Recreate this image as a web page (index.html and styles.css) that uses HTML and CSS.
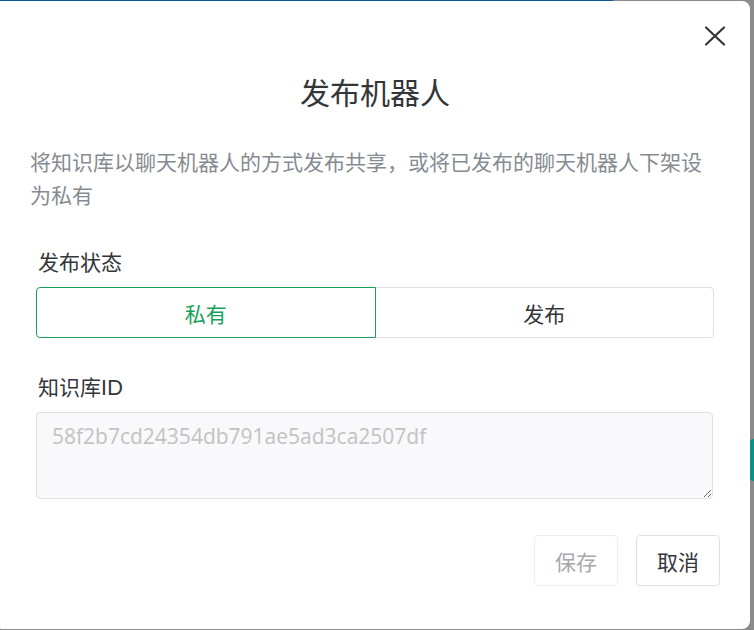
FILE: index.html
```html
<!DOCTYPE html>
<html lang="zh-CN">
<head>
<meta charset="utf-8">
<title>发布机器人</title>
<link rel="stylesheet" href="styles.css">
</head>
<body>
<div class="top-line"></div>
<div class="stage">
  <div class="modal">
    <div class="modal-head">
      <button class="close" aria-label="关闭">
        <svg width="24" height="24" viewBox="0 0 24 24"><path d="M3 3.5 L21 20.5 M21 3.5 L3 20.5" stroke="#333639" stroke-width="2.2" fill="none" stroke-linecap="round"/></svg>
      </button>
    </div>
    <h2 class="title">发布机器人</h2>
    <p class="desc">将知识库以聊天机器人的方式发布共享，或将已发布的聊天机器人下架设为私有</p>
    <div class="form">
      <div class="field">
        <div class="label">发布状态</div>
        <div class="seg">
          <div class="seg-item active">私有</div>
          <div class="seg-item">发布</div>
        </div>
      </div>
      <div class="field">
        <div class="label">知识库ID</div>
        <textarea class="input" disabled>58f2b7cd24354db791ae5ad3ca2507df</textarea>
      </div>
    </div>
    <div class="footer">
      <button class="btn" disabled>保存</button>
      <button class="btn">取消</button>
    </div>
  </div>
  <div class="side-mark"></div>
</div>
</body>
</html>
```
FILE: styles.css
```css
* { box-sizing: border-box; }
html, body { margin: 0; padding: 0; }
body {
  width: 754px;
  height: 630px;
  background: #8b8b8b;
  font-family: "Lato", "Noto Sans CJK SC", sans-serif;
  overflow: hidden;
}
.top-line {
  width: 613px;
  height: 1px;
  background: #0c5797;
}
.stage {
  position: relative;
  display: flex;
}
.modal {
  width: 750px;
  height: 628px;
  background: #fff;
  border-radius: 0 8px 8px 1px;
  display: flex;
  flex-direction: column;
}
.side-mark {
  position: absolute;
  left: 750px;
  top: 438px;
  width: 6px;
  height: 42px;
  border-radius: 5px;
  background: #0e8f86;
}
.modal-head {
  display: flex;
  justify-content: flex-end;
  padding: 23px 23px 0;
}
.close {
  width: 24px;
  height: 24px;
  padding: 0;
  border: 0;
  background: none;
  display: flex;
  align-items: center;
  justify-content: center;
  cursor: pointer;
}
.title {
  margin: 23px 0 0;
  text-align: center;
  font-size: 30px;
  line-height: 42px;
  font-weight: 400;
  color: #333639;
}
.desc {
  margin: 32px 30px 0;
  font-size: 21px;
  line-height: 33px;
  color: #868b91;
}
.form {
  margin-top: 34px;
  padding: 0 36px;
  display: flex;
  flex-direction: column;
  gap: 32px;
}
.label {
  font-size: 21px;
  line-height: 33px;
  color: #333639;
  padding-left: 2px;
  margin-bottom: 9px;
}
.seg {
  display: flex;
  height: 51px;
}
.seg-item {
  flex: 1;
  display: flex;
  align-items: center;
  justify-content: center;
  border: 1px solid #e0e0e6;
  font-size: 21px;
  color: #333639;
  position: relative;
}
.seg-item:first-child { border-radius: 4px 0 0 4px; }
.seg-item:last-child { border-radius: 0 4px 4px 0; margin-left: -1px; }
.seg-item.active {
  border-color: #18a058;
  color: #18a058;
  z-index: 1;
}
.input {
  display: block;
  width: 677px;
  height: 87px;
  margin: 1px 0 0;
  padding: 7px 15px;
  border: 1px solid #e0e0e6;
  border-radius: 4px;
  background: #f9f9fb;
  font-family: "Open Sans", "Noto Sans CJK SC", sans-serif;
  font-size: 21px;
  line-height: 33px;
  color: #c2c2c2;
  resize: vertical;
}
.footer {
  margin-top: 36px;
  padding: 0 30px;
  display: flex;
  justify-content: flex-end;
  gap: 18px;
}
.btn {
  height: 51px;
  width: 84px;
  padding: 0;
  border: 1px solid #e0e0e6;
  border-radius: 4px;
  background: #fff;
  font-family: "Noto Sans CJK SC", sans-serif;
  font-size: 21px;
  color: #333639;
  cursor: pointer;
}
.btn:disabled {
  border-color: #efeff3;
  color: #a8a8aa;
  cursor: not-allowed;
}
```
